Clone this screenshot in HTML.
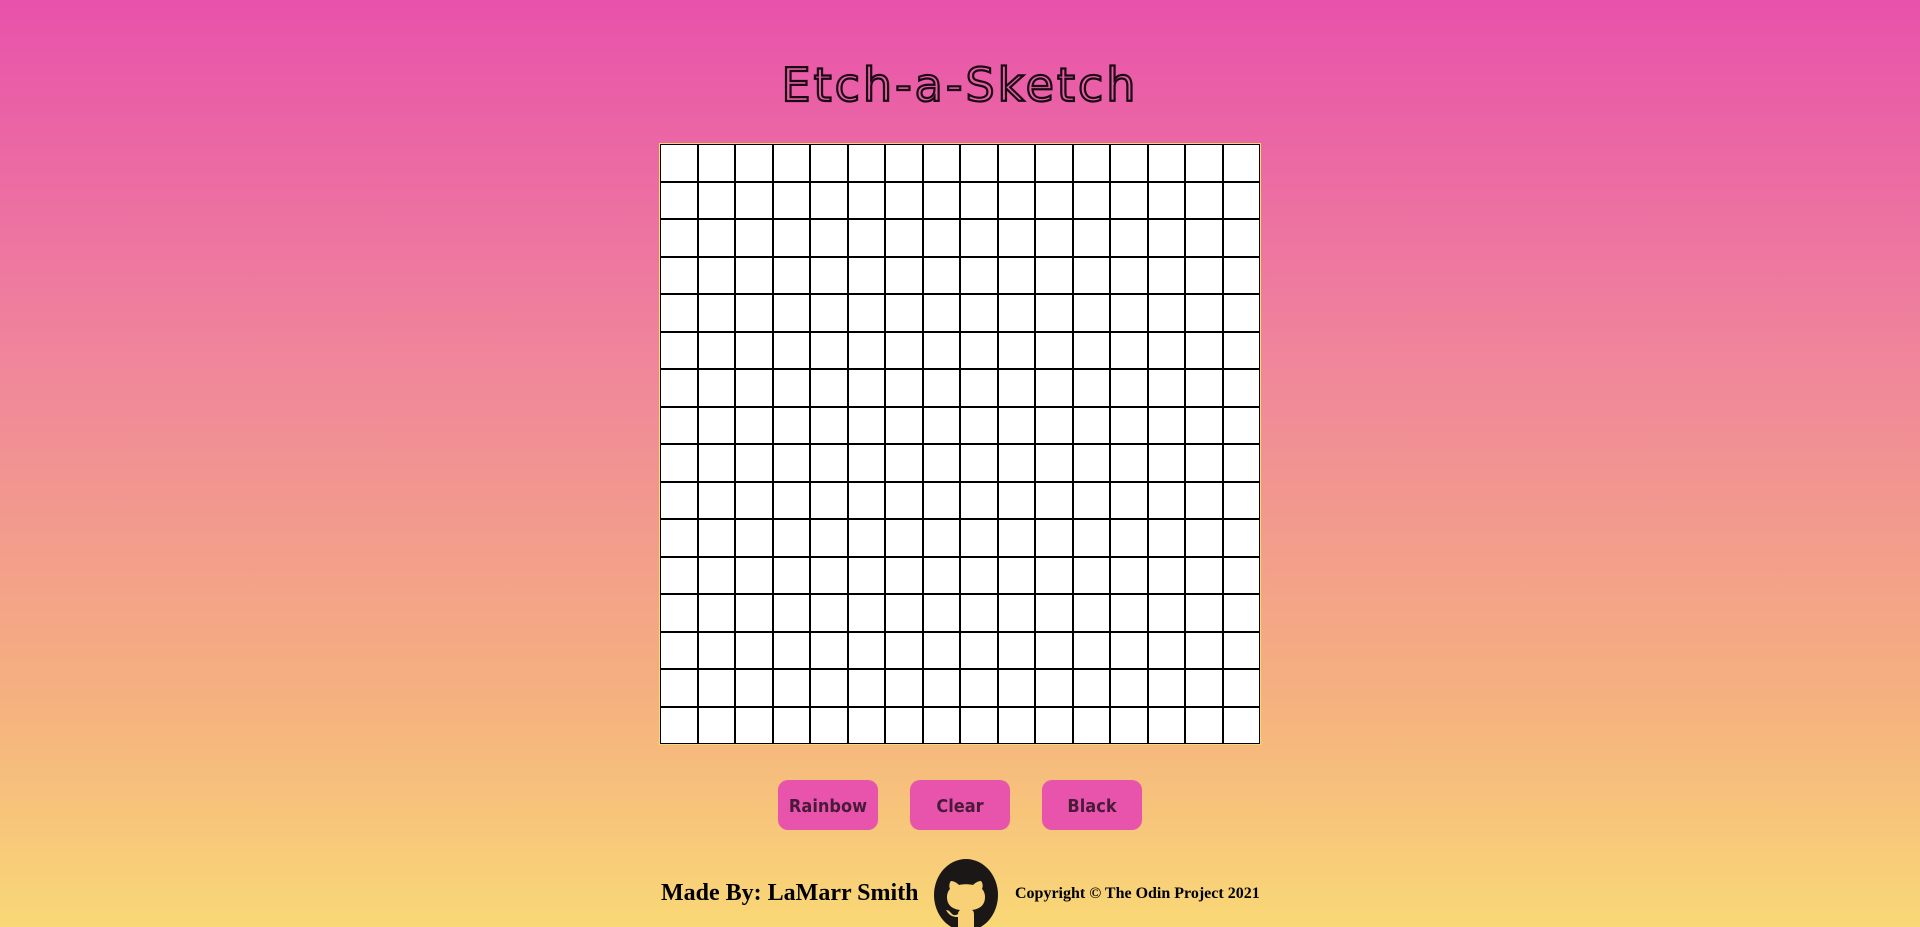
<!DOCTYPE html>
<html><head><meta charset="utf-8"><style>
html,body{margin:0;padding:0;overflow:hidden;height:927px;}
body{width:1920px;height:927px;overflow:hidden;background:linear-gradient(to bottom,#e852ab 0%,#f0879a 40%,#f5b07f 75%,#f9d876 100%);font-family:"Liberation Serif",serif;position:relative;}
h1{position:absolute;top:50px;left:0;width:1920px;text-align:center;margin:0;font-family:"DejaVu Sans","Liberation Sans",sans-serif;font-weight:normal;font-size:46px;letter-spacing:3px;color:transparent;-webkit-text-stroke:2.2px #1a0a14;line-height:70px;}
.grid{position:absolute;left:659px;top:143px;width:600px;height:600px;border:1px solid #f9d876;display:grid;grid-template-columns:repeat(16,1fr);grid-template-rows:repeat(16,1fr);background:#fff;}
.grid div{border:1.3px solid #000;}
.btn{position:absolute;top:780px;width:100px;height:50px;background:#e854ab;border-radius:10px;text-align:center;line-height:54px;font-family:"DejaVu Sans Condensed","DejaVu Sans",sans-serif;font-size:18px;color:#4a1a3a;font-weight:bold;}
.made{position:absolute;left:661px;top:880px;font-weight:bold;font-size:24px;color:#000;}
.copy{position:absolute;left:1015px;top:885px;font-weight:bold;font-size:16px;color:#000;}
.gh{position:absolute;left:934px;top:859px;display:block;}
</style></head><body>
<h1>Etch-a-Sketch</h1>
<div class="grid" id="g"></div>
<div class="btn" style="left:778px">Rainbow</div>
<div class="btn" style="left:910px">Clear</div>
<div class="btn" style="left:1042px">Black</div>
<div class="made">Made By: LaMarr Smith</div>
<svg class="gh" width="64" height="68" viewBox="0 0 64 68"><ellipse cx="32" cy="36" rx="32" ry="36" fill="#1b1717"/>
<path d="M24 72 V58 C16 58 14 54 12 51 C15 51 16 53 18 55 C20 57 23 56 24 55 C24 53 25 52 26 51 C18 50 13 46 13 38 C13 35 14 32 16 30 C15 28 15 24 17 22 C20 22 23 24 25 26 C29 25 35 25 39 26 C41 24 44 22 47 22 C49 24 49 28 48 30 C50 32 51 35 51 38 C51 46 46 50 38 51 C40 52 40 54 40 57 V72 Z" fill="#f8d177"/></svg>
<div class="copy">Copyright © The Odin Project 2021</div>
<script>var g=document.getElementById('g');for(var i=0;i<256;i++)g.appendChild(document.createElement('div'));</script>
</body></html>
